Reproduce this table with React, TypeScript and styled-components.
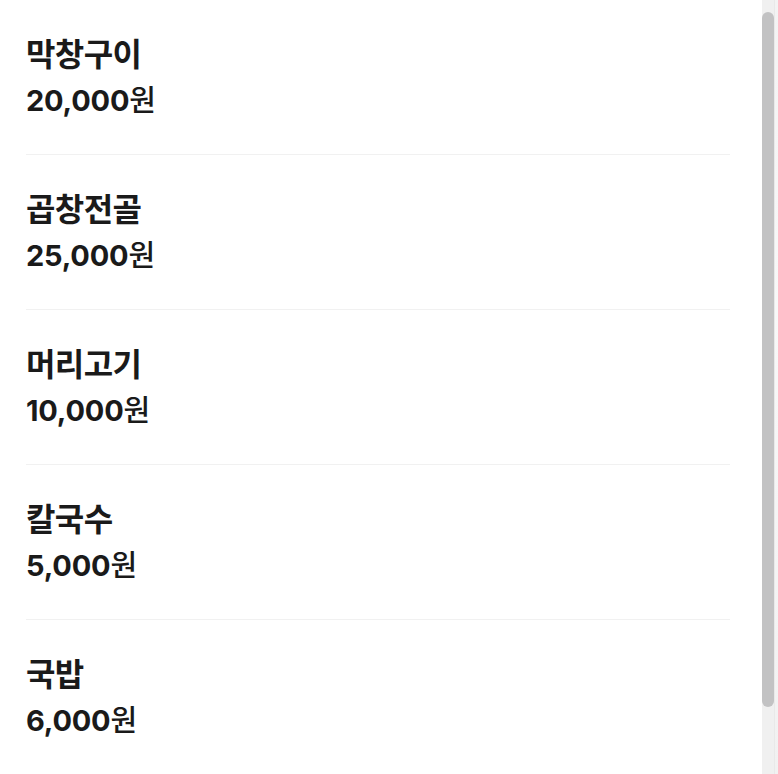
import styled, { createGlobalStyle } from "styled-components";

const GlobalStyle = createGlobalStyle`
  html, body {
    margin: 0;
    padding: 0;
    background: #ffffff;
    overflow: hidden;
  }
  body {
    font-family: Inter, "Noto Sans CJK KR", "Noto Sans", sans-serif;
    color: #1a1a1a;
  }
`;

const Screen = styled.div`
  display: flex;
  width: 778px;
  height: 774px;
`;

const Sheet = styled.div`
  flex: 1;
  padding: 0 32px 0 26px;
  background: #ffffff;
`;

const MenuList = styled.ul`
  list-style: none;
  margin: 0;
  padding: 0;
`;

const MenuItem = styled.li`
  padding: 35px 0 33px;
  border-bottom: 1px solid #f1f1f1;
`;

const MenuName = styled.div`
  font-size: 32px;
  line-height: 40px;
  font-weight: 700;
  letter-spacing: -0.6px;
`;

const MenuPrice = styled.div`
  margin-top: 6px;
  font-size: 29px;
  line-height: 40px;
  font-weight: 700;
  letter-spacing: -0.2px;
`;

const Won = styled.span`
  font-weight: 500;
`;

const ScrollTrack = styled.div`
  width: 12px;
  padding-top: 12px;
  background: #f0f0f0;
`;

const ScrollThumb = styled.div`
  height: 695px;
  border-radius: 6px;
  background: #c2c2c3;
`;

const Backdrop = styled.div`
  width: 4px;
  background: linear-gradient(#f3f3f3, #f8f8f8 40%, #f1f1f1);
  border-left: 1px solid #e9e9e9;
  box-sizing: border-box;
`;

type Menu = {
  name: string;
  price: number;
};

const menus: Menu[] = [
  { name: "막창구이", price: 20000 },
  { name: "곱창전골", price: 25000 },
  { name: "머리고기", price: 10000 },
  { name: "칼국수", price: 5000 },
  { name: "국밥", price: 6000 },
];

function App() {
  return (
    <>
      <GlobalStyle />
      <Screen>
        <Sheet>
          <MenuList>
            {menus.map((menu) => (
              <MenuItem key={menu.name}>
                <MenuName>{menu.name}</MenuName>
                <MenuPrice>
                  {menu.price.toLocaleString("en-US")}
                  <Won>원</Won>
                </MenuPrice>
              </MenuItem>
            ))}
          </MenuList>
        </Sheet>
        <ScrollTrack>
          <ScrollThumb />
        </ScrollTrack>
        <Backdrop />
      </Screen>
    </>
  );
}

export default App;
